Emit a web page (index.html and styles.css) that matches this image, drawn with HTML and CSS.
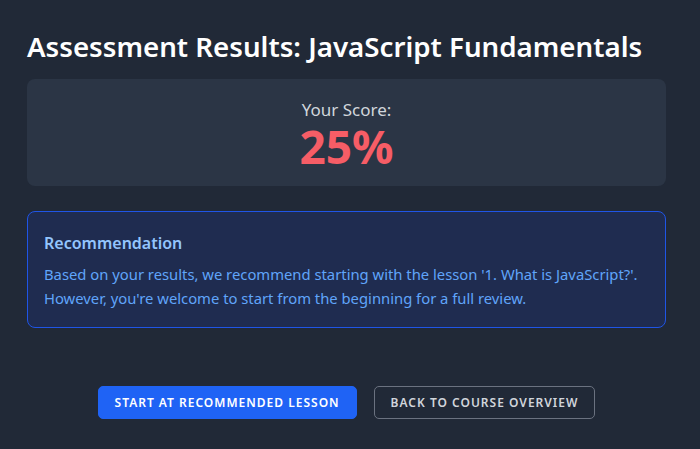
FILE: index.html
```html
<!DOCTYPE html>
<html lang="en">
<head>
<meta charset="utf-8">
<title>Assessment Results</title>
<link rel="stylesheet" href="styles.css">
</head>
<body>
<main class="page">
  <h1 class="title">Assessment Results: JavaScript Fundamentals</h1>
  <section class="score-card">
    <p class="score-label">Your Score:</p>
    <p class="score-value">25%</p>
  </section>
  <section class="rec">
    <h2 class="rec-title">Recommendation</h2>
    <p class="rec-text">Based on your results, we recommend starting with the lesson '1. What is JavaScript?'. However, you're welcome to start from the beginning for a full review.</p>
  </section>
  <div class="actions">
    <button class="btn btn-primary">Start at Recommended Lesson</button>
    <button class="btn btn-outline">Back to Course Overview</button>
  </div>
</main>
</body>
</html>
```
FILE: styles.css
```css
* { box-sizing: border-box; }
html, body { margin: 0; padding: 0; }
body {
  background: #212937;
  font-family: "Noto Sans", "Open Sans", sans-serif;
  color: #f3f4f6;
  height: 449px;
  overflow: hidden;
}
.page {
  width: 639px;
  margin-left: 27px;
  padding-top: 28px;
}
.title {
  margin: 0;
  font-size: 27.7px;
  font-weight: 600;
  line-height: 36px;
  color: #ffffff;
}
.score-card {
  margin-top: 15px;
  height: 107px;
  background: #2b3545;
  border-radius: 8px;
  text-align: center;
  padding-top: 20px;
}
.score-label {
  margin: 0;
  font-size: 17px;
  line-height: 22px;
  color: #d1d5db;
}
.score-value {
  margin: 0;
  font-size: 46px;
  line-height: 50px;
  font-weight: 700;
  color: #f65d66;
}
.rec {
  margin-top: 25px;
  height: 117px;
  background: #1f2c50;
  border: 1px solid #1f55e6;
  border-radius: 8px;
  padding: 20px 8px 20px 16px;
}
.rec-title {
  margin: 0 0 8px;
  font-size: 16px;
  font-weight: 600;
  line-height: 22px;
  color: #93c5fd;
}
.rec-text {
  margin: 0;
  font-size: 14.8px;
  line-height: 24px;
  color: #60a5fa;
}
.actions {
  display: flex;
  justify-content: center;
  gap: 17px;
  margin-top: 58px;
}
.btn {
  height: 33px;
  padding: 0 16px;
  font-family: inherit;
  font-size: 12px;
  font-weight: 600;
  text-transform: uppercase;
  letter-spacing: 1px;
  border-radius: 5px;
  cursor: pointer;
}
.btn-primary {
  background: #1f63f5;
  color: #ffffff;
  border: 1px solid #1f63f5;
}
.btn-outline {
  background: transparent;
  color: #d1d5db;
  border: 1px solid #6b7280;
}
```
